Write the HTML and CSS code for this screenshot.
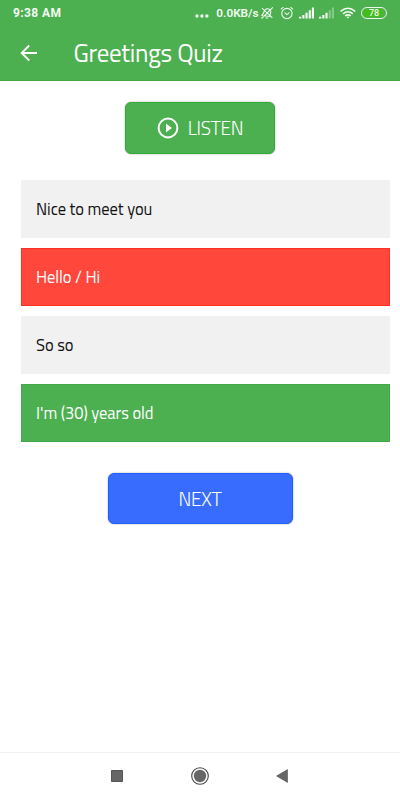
FILE: index.html
```html
<!DOCTYPE html>
<html lang="en">
<head>
<meta charset="utf-8">
<title>Greetings Quiz</title>
<link rel="stylesheet" href="styles.css">
</head>
<body>
<div class="screen">
  <header class="header">
    <div class="status">
      <span class="clock">9:38 AM</span>
      <svg class="dots" width="14" height="4" viewBox="0 0 14 4" fill="currentColor"><circle cx="2" cy="2" r="1.7"/><circle cx="7" cy="2" r="1.7"/><circle cx="12" cy="2" r="1.7"/></svg>
      <span class="speed">0.0KB/s</span>
      <svg class="bell" width="14" height="14" viewBox="0 0 14 14" fill="none" stroke="currentColor" stroke-width="1.1"><path d="M3 9.800 10.800 10.500 9.900 9C11.400 6.500 11.300 4.300 9.400 3.200 7.300 2 5.200 3 4.300 5.400 3.800 7 3.400 8.200 1.800 9.200zM5.700 12h2.600M13 1.300 1.500 12.800M2 2l10.500 10"/></svg>
      <svg class="alarm" width="14" height="14" viewBox="0 0 14 14" fill="none" stroke="currentColor" stroke-width="1.1"><circle cx="7" cy="7.500" r="5.200"/><path d="M4.700 6.700 7 8.600l2.400-2M.8 3.300 3.400 1M13.200 3.300 10.600 1"/></svg>
      <svg class="signal" width="16" height="12" viewBox="0 0 16 12" fill="currentColor"><path d="M0 9.800h2.300v1.700H0zM3.300 8h2.200v3.500H3.300zM6.500 5.800h2.200v5.700H6.500zM9.800 3.300H12v8.200H9.800zM13 .5h2.200v11H13z"/></svg>
      <svg class="signal second" width="16" height="12" viewBox="0 0 16 12" fill="currentColor"><path d="M0 9.800h2.300v1.700H0zM3.300 8h2.200v3.500H3.300zM6.500 5.800h2.200v5.700H6.500z"/><path opacity=".35" d="M9.800 3.300H12v8.200H9.800zM13 .5h2.200v11H13z"/></svg>
      <svg class="wifi" width="16" height="12" viewBox="0 0 16 12" fill="none" stroke="currentColor" stroke-width="1.600"><path d="M.6 4.300Q8-2 15.400 4.300M3 6.800q5-4.200 10 0M5.200 9q2.800-2.200 5.600 0"/><path d="M6.400 9.800h3.200L8 11.600z" fill="currentColor" stroke="none"/></svg>
      <span class="battery"><span class="charge">78</span></span>
    </div>
    <div class="appbar">
      <svg class="back" width="18" height="18" viewBox="0 0 18 18" fill="none" stroke="currentColor" stroke-width="1.900"><path d="M17 9H2M9.200 1.500 1.700 9l7.500 7.500"/></svg>
      <h1 class="title">Greetings Quiz</h1>
    </div>
  </header>
  <main class="content">
    <button class="button listen">
      <svg width="22" height="22" viewBox="0 0 22 22"><circle cx="11" cy="11" r="9.400" fill="none" stroke="currentColor" stroke-width="2"/><path d="M9 6.500v9l6-4.500z" fill="currentColor"/></svg>
      <span class="label">LISTEN</span>
    </button>
    <ul class="options">
      <li class="option">Nice to meet you</li>
      <li class="option wrong">Hello / Hi</li>
      <li class="option">So so</li>
      <li class="option right">I'm (30) years old</li>
    </ul>
    <button class="button next"><span class="label">NEXT</span></button>
  </main>
  <nav class="nav">
    <svg width="12" height="12" viewBox="0 0 12 12"><path d="M.5.500h11v11H.5z" fill="#666" stroke="#555"/></svg>
    <svg width="18" height="18" viewBox="0 0 18 18"><circle cx="9" cy="9" r="8.300" fill="none" stroke="#444" stroke-width="1.100"/><circle cx="9" cy="9" r="6.200" fill="#666"/></svg>
    <svg width="12" height="14" viewBox="0 0 12 14"><path d="M11.500.600v12.800L.6 7z" fill="#666" stroke="#555" stroke-width=".6"/></svg>
  </nav>
</div>
</body>
</html>
```
FILE: styles.css
```css
* { box-sizing: border-box; }
body {
  margin: 0;
  background: #fff;
  font-family: "Titillium Web", "Open Sans", "Noto Sans", sans-serif;
}
.screen { width: 400px; height: 800px; display: flex; flex-direction: column; }
.header { height: 81px; flex: none; background: #4caf50; color: #fff; border-bottom: 1px solid #43a948; }
.status {
  height: 25px;
  padding: 1px 13px 0;
  display: flex;
  align-items: center;
  color: #f3fbf3;
  font: 500 12px/24px Roboto, sans-serif;
}
.clock { width: 50px; font-weight: 700; letter-spacing: .4px; white-space: nowrap; }
.dots { margin: 6px 7px 0 133px; }
.speed { width: 43px; font-weight: 600; font-size: 11.800px; white-space: nowrap; }
.bell { margin: 0 0 1px 1px; }
.alarm { margin: 0 0 1px 6px; }
.signal { margin-left: 5px; margin-bottom: 1px; }
.second { margin-left: 5px; }
.wifi { margin: 0 0 1px 5px; }
.battery {
  width: 26px;
  height: 12px;
  margin: 0 0 1px 5px;
  padding: 1px;
  flex: none;
  border: 1px solid #eaf7ea;
  border-radius: 6px;
}
.charge {
  display: block;
  width: 19px;
  height: 8px;
  padding-left: 6px;
  border-radius: 4px 0 0 4px;
  background: #45bd18;
  font-size: 9px;
  line-height: 9px;
}
.appbar { height: 56px; padding-left: 20px; display: flex; align-items: center; }
.title { margin: 0 0 1px 35.500px; font-size: 25px; line-height: 32px; font-weight: 400; letter-spacing: -.3px; white-space: nowrap; }
.content { flex: 1; padding: 21px 10px 0 21px; display: flex; flex-direction: column; }
.button {
  border: 1px solid;
  border-radius: 6px;
  padding: 0;
  color: #fff;
  font-family: inherit;
  font-size: 19px;
  display: flex;
  align-items: center;
  justify-content: center;
  box-shadow: 0 0 2px rgba(0, 0, 0, .35);
}
.listen { width: 150px; height: 52px; margin-left: 104px; gap: 9px; background: #4caf50; border-color: #2cab35; }
.options { list-style: none; margin: 26px 0 31px; padding: 0; display: grid; gap: 10.500px; }
.option {
  height: 57.500px;
  padding: 0 0 0 14px;
  display: flex;
  align-items: center;
  border: 1px solid #f1f1f1;
  background: #f1f1f1;
  color: #111;
  font-size: 16.500px;
  letter-spacing: -.05px;
  white-space: nowrap;
}
.wrong { background: #ff473b; border-color: #ff2f24; color: #fff; }
.right { background: #4caf50; border-color: #43aa47; color: #fff; }
.next { width: 185px; height: 51px; margin-left: 86.500px; background: #376cff; border-color: #1f5ff9; }
.label { font-weight: 300; letter-spacing: -.25px; }
.listen .label { padding-bottom: 1px; }
.nav {
  height: 48px;
  padding: 0 112px 1px 111px;
  display: flex;
  align-items: center;
  justify-content: space-between;
  border-top: 1px solid #f2f2f2;
}
```
